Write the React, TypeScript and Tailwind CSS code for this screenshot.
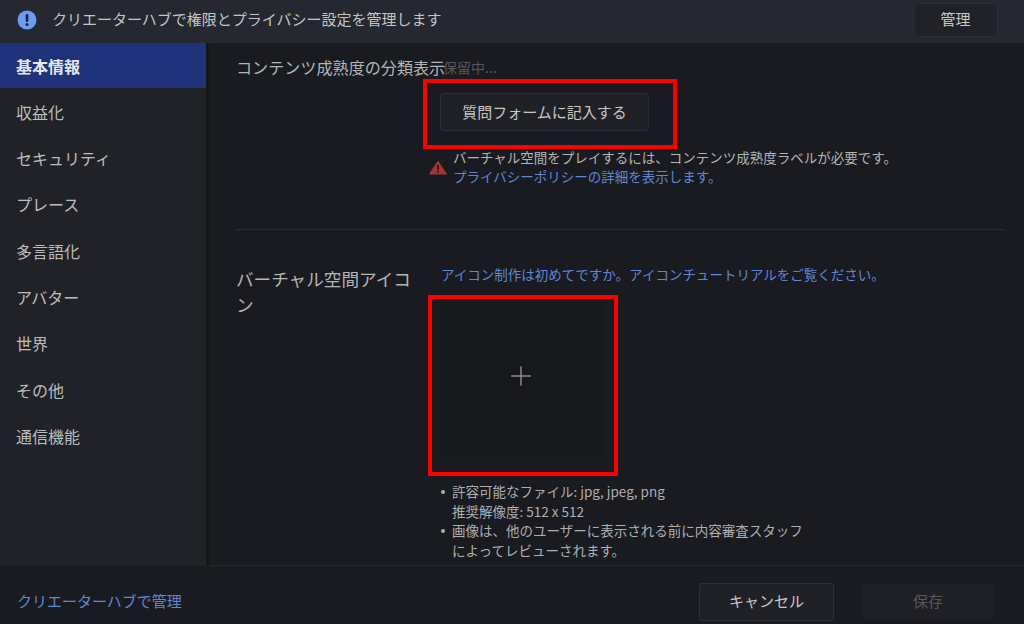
import { Plus } from "lucide-react";

const navItems = ["基本情報", "収益化", "セキュリティ", "プレース", "多言語化", "アバター", "世界", "その他", "通信機能"];

function InfoIcon() {
  return (
    <svg width="20" height="20" viewBox="0 0 20 20" className="shrink-0">
      <circle cx="10" cy="10" r="9.5" fill="#6c9bf3" />
      <rect x="8.7" y="4" width="2.6" height="8" rx="1.2" fill="#1d2433" />
      <circle cx="10" cy="14.6" r="1.5" fill="#1d2433" />
    </svg>
  );
}

function WarnIcon() {
  return (
    <svg width="18" height="15" viewBox="0 0 18 15" className="shrink-0">
      <path d="M9 0.5 L17.6 13.6 a0.7 0.7 0 0 1 -0.5 1 H0.9 a0.7 0.7 0 0 1 -0.5 -1 Z" fill="#a83434" />
      <rect x="8.1" y="4.8" width="1.8" height="5" fill="#1a1b20" />
      <rect x="8.1" y="10.8" width="1.8" height="1.8" fill="#1a1b20" />
    </svg>
  );
}

function Dot() {
  return (
    <span className="w-[11px] shrink-0 pt-[8px]">
      <span className="block w-[4px] h-[4px] rounded-full bg-[#aeafb0]" />
    </span>
  );
}

export default function App() {
  return (
    <div
      className="w-[1024px] h-[624px] flex flex-col overflow-hidden bg-[#191b20] text-[#bdbebe]"
      style={{ fontFamily: '"Noto Sans CJK JP", "Noto Sans", sans-serif' }}
    >
      <div className="h-[43px] shrink-0 flex items-center justify-between bg-[#252831] pl-[17px] pr-[26px] pb-[4px]">
        <div className="flex items-center gap-[15px]">
          <InfoIcon />
          <span className="text-[15px] text-[#c4c5c6]">クリエーターハブで権限とプライバシー設定を管理します</span>
        </div>
        <button className="w-[85px] h-[34px] rounded-[4px] border border-[#2c2f38] bg-[#212227] text-[15px] text-[#c8c8c8]">
          管理
        </button>
      </div>

      <div className="flex flex-1 min-h-0">
        <nav className="w-[206px] shrink-0 bg-[#202228]">
          {navItems.map((item, i) => (
            <div
              key={item}
              className={
                i === 0
                  ? "h-[45px] mb-[1.3px] flex items-center pl-[16px] bg-[#20337a] text-[16px] font-bold text-[#e6e7ea]"
                  : "h-[45px] mb-[1.3px] flex items-center pl-[16px] text-[16px] text-[#bcbdbe]"
              }
            >
              {item}
            </div>
          ))}
        </nav>
        <div className="w-[3px] shrink-0 bg-[#15161a]" />

        <main className="flex-1 min-w-0 pl-[27px] pr-[19px] border-b border-[#25272c]">
          <div className="flex h-[186px] pt-[11px]">
            <div className="w-[207px] shrink-0 text-[16.1px] leading-[27px] whitespace-nowrap text-[#b4b5b6]">
              コンテンツ成熟度の分類表示
            </div>
            <div className="min-w-0 flex-1">
              <div className="text-[14px] leading-[27px] text-[#55575c]">保留中...</div>
              <div className="relative mt-[12px] w-[209px] h-[38px] ml-[-3px] flex items-center justify-center rounded-[3px] border border-[#2c2e34] bg-[#202126] text-[15px] text-[#c6c6c6]">
                質問フォームに記入する
                <div className="absolute left-[-18px] top-[-15px] w-[254px] h-[70px] border-[4px] border-[#ff0000]" />
              </div>
              <div className="flex items-center gap-[6px] mt-[17px] ml-[-14px]">
                <WarnIcon />
                <div className="text-[13.5px] leading-[19px] whitespace-nowrap">
                  <div className="text-[#b4b5b6]">バーチャル空間をプレイするには、コンテンツ成熟度ラベルが必要です。</div>
                  <div className="text-[#5f87d8]">プライバシーポリシーの詳細を表示します。</div>
                </div>
              </div>
            </div>
          </div>

          <div className="border-t border-[#2a2c31]" />

          <div className="flex pt-[36px]">
            <div className="w-[205px] shrink-0 text-[17.6px] leading-[26px] text-[#b4b5b6] pr-[16px]">
              バーチャル空間アイコン
            </div>
            <div className="min-w-0 flex-1">
              <div className="text-[13.5px] leading-[19px] mt-[-1px] whitespace-nowrap text-[#5f87d8]">
                アイコン制作は初めてですか。アイコンチュートリアルをご覧ください。
              </div>
              <div className="relative mt-[20px] w-[164px] h-[151px] ml-[-2px] flex items-center justify-center bg-[#17181c]">
                <Plus size={32} strokeWidth={1.1} className="text-[#8b8c8f] mb-[8px]" />
                <div className="absolute left-[-11px] top-[-9px] w-[190px] h-[181px] border-[4px] border-[#ff0000]" />
              </div>
              <ul className="mt-[27px] text-[13.5px] leading-[19.5px] text-[#aeafb0]">
                <li className="flex">
                  <Dot />
                  <span>
                    許容可能なファイル: jpg, jpeg, png
                    <br />
                    推奨解像度: 512 x 512
                  </span>
                </li>
                <li className="flex">
                  <Dot />
                  <span className="w-[360px]">
                    画像は、他のユーザーに表示される前に内容審査スタッフ
                    <br />
                    によってレビューされます。
                  </span>
                </li>
              </ul>
            </div>
          </div>
        </main>
      </div>

      <div className="h-[58px] shrink-0 flex items-center justify-between pl-[17px] pr-[30px] pt-[13px]">
        <span className="text-[15px] text-[#5f87d8]">クリエーターハブで管理</span>
        <div className="flex items-center gap-[28px]">
          <button className="w-[135px] h-[38px] rounded-[3px] border border-[#2e3036] bg-[#202126] text-[15px] text-[#c8c8c8]">
            キャンセル
          </button>
          <button className="w-[132px] h-[36px] rounded-[3px] bg-[#1f2025] text-[15px] text-[#55575c]">
            保存
          </button>
        </div>
      </div>
    </div>
  );
}
